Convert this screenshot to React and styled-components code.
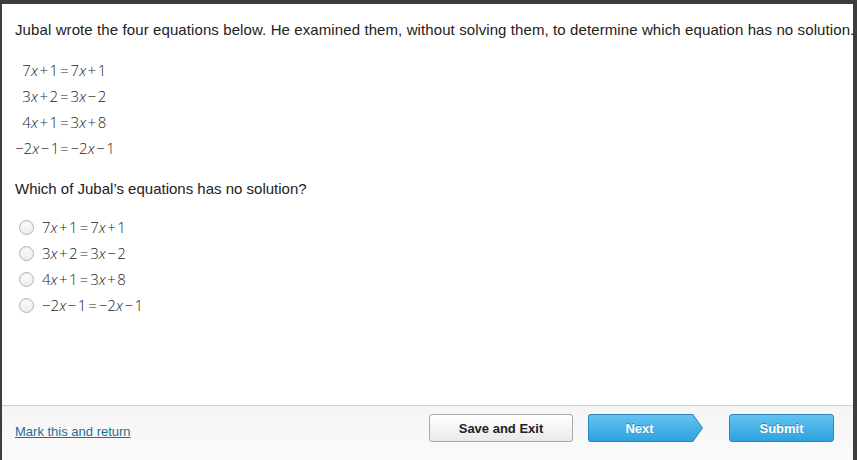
import React from "react";
import styled, { createGlobalStyle } from "styled-components";

const GlobalStyle = createGlobalStyle`
  html, body {
    margin: 0;
    padding: 0;
    background: #fff;
  }
  body {
    font-family: "Liberation Sans", Arial, sans-serif;
  }
`;

const equations = [
  ["7", "+", "1", "7", "+", "1"],
  ["3", "+", "2", "3", "−", "2"],
  ["4", "+", "1", "3", "+", "8"],
  ["−2", "−", "1", "−2", "−", "1"],
];

function Side({ coef, op, num }) {
  return (
    <>
      {coef}
      <Var>x</Var>
      <Op>{op}</Op>
      {num}
    </>
  );
}

function Equation({ eq, inline }) {
  const [a, b, c, d, e, f] = eq;
  if (inline) {
    return (
      <MathText>
        <Side coef={a} op={b} num={c} />
        <Eq>=</Eq>
        <Side coef={d} op={e} num={f} />
      </MathText>
    );
  }
  return (
    <>
      <LeftSide>
        <Side coef={a} op={b} num={c} />
      </LeftSide>
      <Eq>=</Eq>
      <RightSide>
        <Side coef={d} op={e} num={f} />
      </RightSide>
    </>
  );
}

export default function App() {
  return (
    <>
      <GlobalStyle />
      <Frame>
        <Content>
          <Prompt>
            Jubal wrote the four equations below. He examined them, without solving them, to
            determine which equation has no solution.
          </Prompt>
          <EqGrid>
            {equations.map((eq, i) => (
              <Equation key={i} eq={eq} />
            ))}
          </EqGrid>
          <Question>Which of Jubal’s equations has no solution?</Question>
          <Options>
            {equations.map((eq, i) => (
              <Option key={i}>
                <Radio />
                <Equation eq={eq} inline />
              </Option>
            ))}
          </Options>
        </Content>
        <Footer>
          <MarkLink href="#">Mark this and return</MarkLink>
          <Buttons>
            <SaveButton>Save and Exit</SaveButton>
            <NextOuter>
              <NextInner>Next</NextInner>
            </NextOuter>
            <SubmitButton>Submit</SubmitButton>
          </Buttons>
        </Footer>
      </Frame>
    </>
  );
}

const Frame = styled.div`
  width: 857px;
  height: 460px;
  box-sizing: border-box;
  border-top: 4px solid #3d3d3d;
  border-left: 2px solid #3d3d3d;
  border-right: 4px solid #3d3d3d;
  display: flex;
  flex-direction: column;
  background: #fff;
  overflow: hidden;
`;

const Content = styled.div`
  flex: 1;
  padding: 17px 0 0 13px;
  color: #222;
`;

const Prompt = styled.div`
  font-size: 15px;
  letter-spacing: 0.1px;
  line-height: 18px;
  white-space: nowrap;
`;

const mathFont = `
  font-family: "Open Sans", "Liberation Sans", sans-serif;
  font-weight: 300;
  font-size: 15px;
  line-height: 19px;
  color: #1e1e1e;
`;

const EqGrid = styled.div`
  display: grid;
  grid-template-columns: 43px auto auto;
  justify-content: start;
  row-gap: 7px;
  margin-top: 22px;
  ${mathFont}
`;

const LeftSide = styled.div`
  text-align: right;
  white-space: nowrap;
`;

const RightSide = styled.div`
  white-space: nowrap;
`;

const MathText = styled.span`
  ${mathFont}
  white-space: nowrap;
`;

const Var = styled.i`
  font-style: italic;
`;

const Op = styled.span`
  margin: 0 1.5px;
`;

const Eq = styled.span`
  margin: 0 2px;
`;

const Question = styled.div`
  margin-top: 22px;
  font-size: 15px;
  line-height: 18px;
`;

const Options = styled.div`
  margin-top: 20px;
  display: flex;
  flex-direction: column;
  gap: 7px;
  padding-left: 4px;
`;

const Option = styled.label`
  display: flex;
  align-items: center;
  gap: 8px;
  height: 19px;
`;

const Radio = styled.span`
  width: 13px;
  height: 13px;
  border-radius: 50%;
  border: 1px solid #b4b4b4;
  background: linear-gradient(#fdfdfd, #ececec);
  box-shadow: inset 0 1px 1px rgba(0, 0, 0, 0.08);
  flex: none;
`;

const Footer = styled.div`
  height: 55px;
  flex: none;
  box-sizing: border-box;
  border-top: 1px solid #cfcfcf;
  background: linear-gradient(#f5f5f5, #fafafa);
  display: flex;
  align-items: flex-start;
  justify-content: space-between;
  padding: 8px 19px 0 13px;
`;

const MarkLink = styled.a`
  font-size: 13px;
  line-height: 16px;
  color: #1f6f98;
  text-decoration: underline;
  margin-top: 10px;
`;

const Buttons = styled.div`
  display: flex;
  align-items: center;
`;

const BaseButton = styled.button`
  height: 28px;
  box-sizing: border-box;
  border-radius: 3px;
  font-family: "Liberation Sans", Arial, sans-serif;
  font-weight: bold;
  font-size: 13px;
  cursor: pointer;
  padding: 0;
`;

const SaveButton = styled(BaseButton)`
  width: 144px;
  border: 1px solid #a9a9a9;
  background: linear-gradient(#ffffff, #e9e9e9);
  color: #222;
  margin-right: 15px;
`;

const SubmitButton = styled(BaseButton)`
  width: 105px;
  border: 1px solid #2b86bd;
  background: linear-gradient(#62c3f1, #2ea2de);
  color: #fff;
  text-shadow: 0 -1px 0 rgba(0, 60, 110, 0.45);
  margin-left: 26px;
`;

const NextOuter = styled.div`
  width: 115px;
  height: 28px;
  box-sizing: border-box;
  padding: 1px;
  background: #2b86bd;
  clip-path: polygon(0 0, calc(100% - 10px) 0, 100% 50%, calc(100% - 10px) 100%, 0 100%);
  border-radius: 3px 0 0 3px;
`;

const NextInner = styled.div`
  height: 100%;
  clip-path: polygon(0 0, calc(100% - 9.5px) 0, 100% 50%, calc(100% - 9.5px) 100%, 0 100%);
  background: linear-gradient(#62c3f1, #2ea2de);
  border-radius: 2px 0 0 2px;
  display: flex;
  align-items: center;
  justify-content: center;
  padding-right: 12px;
  color: #fff;
  font-weight: bold;
  font-size: 13px;
  text-shadow: 0 -1px 0 rgba(0, 60, 110, 0.45);
`;
